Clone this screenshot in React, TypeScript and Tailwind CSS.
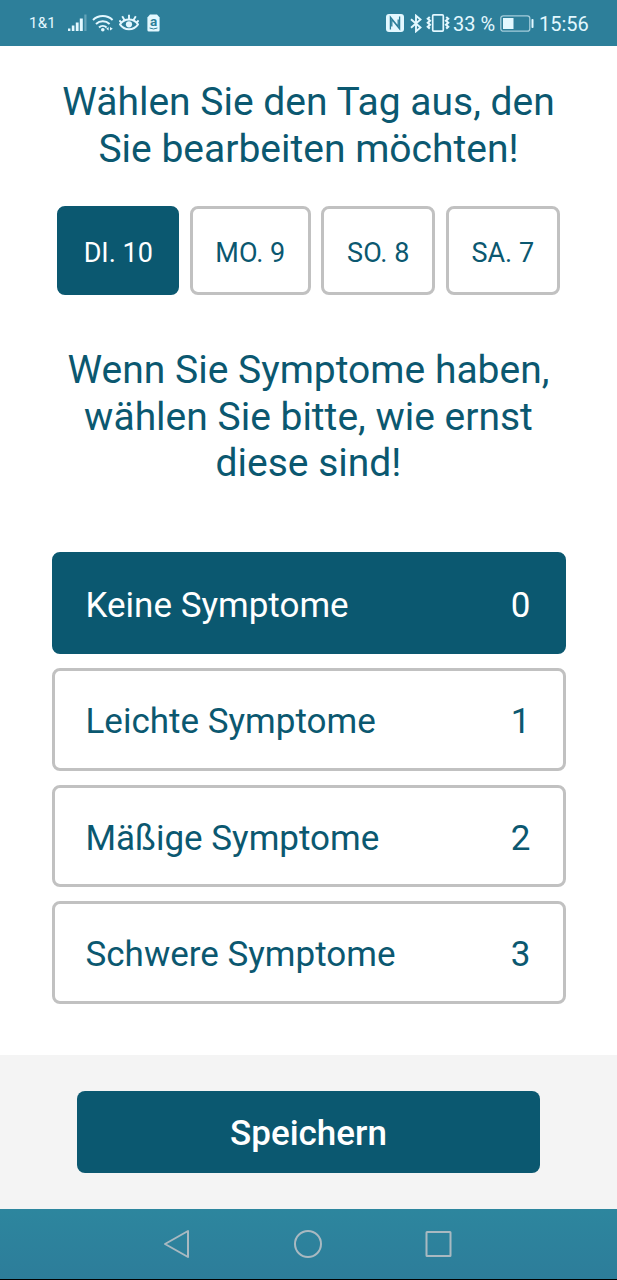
import { useState } from 'react';

const DAYS = [
  { label: 'DI. 10', width: 'w-[122px]' },
  { label: 'MO. 9', width: 'w-[121px]' },
  { label: 'SO. 8', width: 'w-[114px]' },
  { label: 'SA. 7', width: 'w-[114px]' },
];

const SYMPTOMS = ['Keine Symptome', 'Leichte Symptome', 'Mäßige Symptome', 'Schwere Symptome'];

function SignalIcon() {
  return (
    <svg width="20" height="18" viewBox="0 0 20 18" fill="currentColor">
      <rect x="0" y="14.5" width="2.4" height="2.5" />
      <rect x="3.8" y="11.5" width="2.6" height="5.5" />
      <rect x="7.8" y="8.5" width="2.8" height="8.5" />
      <rect x="11.8" y="4.5" width="3" height="12.5" />
      <rect x="16.3" y="0.5" width="2.2" height="16.5" opacity="0.3" />
    </svg>
  );
}

function WifiIcon() {
  return (
    <svg width="22" height="18" viewBox="0 0 22 18" fill="none" stroke="currentColor" strokeWidth="2">
      <path d="M1 6a14.2 14.2 0 0 1 19.6 0" />
      <path d="M4 10a10 10 0 0 1 13.6 0" />
      <path d="M7 13.500a5.6 5.6 0 0 1 7.6 0" />
      <circle cx="10.8" cy="15.800" r="1.800" fill="currentColor" stroke="none" />
      <path d="M16.600 12.900v3.600l-2.400-1.800zM18 12.900v3.600l2.800-1.800z" fill="currentColor" stroke="none" />
    </svg>
  );
}

function EyeIcon() {
  return (
    <svg width="20" height="18" viewBox="0 0 20 18" fill="none" stroke="currentColor" strokeWidth="1.9">
      <path d="M1 10.4C5.4 3.8 14.6 3.8 19 10.4C14.6 16.9 5.4 16.9 1 10.4Z" />
      <circle cx="10" cy="10.3" r="3.1" fill="currentColor" stroke="none" />
      <path d="M10 5.2V.8M5.6 6.3L3.2 2.3M14.4 6.3L16.8 2.3M2.4 8.7L.4 6.4M17.6 8.7L19.6 6.4" />
    </svg>
  );
}

function AppstoreIcon() {
  return (
    <svg width="13" height="18" viewBox="0 0 13 18">
      <path d="M3 .5h7l2.6 3V16a1.6 1.6 0 0 1-1.6 1.6H2A1.6 1.6 0 0 1 .4 16V3.5z" fill="currentColor" />
      <text x="6.5" y="12.4" textAnchor="middle" fontSize="13.5" fontWeight="700" fontFamily="Roboto" fill="#2d7f9a">a</text>
      <path d="M2.6 14q4 1.9 7.8 0" fill="none" stroke="#2d7f9a" strokeWidth="1" />
    </svg>
  );
}

function NfcIcon() {
  return (
    <svg width="18" height="18" viewBox="0 0 18 18">
      <rect width="18" height="18" rx="3" fill="currentColor" />
      <path d="M4.4 15.6V3L12.2 12.6V5.6M13.6 2.4V15L5.800 5.4V12.400" fill="none" stroke="#2d7f9a" strokeWidth="1.300" />
    </svg>
  );
}

function BluetoothIcon() {
  return (
    <svg width="12" height="19" viewBox="0 0 12 19" fill="none" stroke="currentColor" strokeWidth="1.9">
      <path d="M1 5.2L10.5 13.5L6 17.3V1.7L10.5 5.500L1 13.8" />
    </svg>
  );
}

function VibrateIcon() {
  return (
    <svg width="24" height="18" viewBox="0 0 24 18" fill="none" stroke="currentColor" strokeWidth="1.7">
      <rect x="6.7" y=".9" width="10.6" height="16.2" rx="1" />
      <path d="M3.8 3L1.8 4.8L4 6.8L1.8 8.8L4 10.8L1.8 12.8L3.8 14.6M20.2 3L22.2 4.8L20 6.8L22.2 8.8L20 10.8L22.2 12.8L20.2 14.6" strokeWidth="2.1" />
    </svg>
  );
}

function BatteryIcon() {
  return (
    <svg width="34" height="17" viewBox="0 0 34 17">
      <rect x=".8" y=".8" width="29" height="15.4" rx="2.5" fill="none" stroke="currentColor" strokeWidth="1.3" opacity=".65" />
      <rect x="3" y="3" width="10.5" height="11" fill="currentColor" />
      <rect x="31.5" y="4" width="2" height="9" rx=".8" fill="currentColor" />
    </svg>
  );
}

function StatusBar() {
  return (
    <header className="flex h-[46px] shrink-0 items-center justify-between bg-[#2d7f9a] pr-7 pl-[29px] text-[#e3f8ff]">
      <div className="flex items-center">
        <span className="w-[39px] pt-px text-[15px] tracking-[0.2px]">1&amp;1</span>
        <SignalIcon />
        <span className="ml-1"><WifiIcon /></span>
        <span className="ml-[5px]"><EyeIcon /></span>
        <span className="ml-2"><AppstoreIcon /></span>
      </div>
      <div className="flex items-center">
        <NfcIcon />
        <span className="ml-1.5"><BluetoothIcon /></span>
        <span className="ml-1"><VibrateIcon /></span>
        <span className="ml-[3px] w-[47px] pt-0.5 text-[20px] whitespace-nowrap">33 %</span>
        <BatteryIcon />
        <span className="ml-[5px] w-[50px] pt-0.5 text-[20px] whitespace-nowrap">15:56</span>
      </div>
    </header>
  );
}

function NavBar() {
  return (
    <nav className="flex h-[71px] shrink-0 items-center justify-center gap-[101px] border-b border-black bg-linear-to-b from-[#2d869e] to-[#2d7d9a] pr-px text-[#a9b9c1]">
      <svg width="30" height="30" viewBox="0 0 30 30" fill="none" stroke="currentColor" strokeWidth="2" strokeLinejoin="round">
        <path d="M3 15L26 2V28Z" />
      </svg>
      <svg width="30" height="30" viewBox="0 0 30 30" fill="none" stroke="currentColor" strokeWidth="2">
        <circle cx="15" cy="15" r="13" />
      </svg>
      <svg width="30" height="30" viewBox="0 0 30 30" fill="none" stroke="currentColor" strokeWidth="2" strokeLinejoin="round">
        <rect x="2.500" y="3" width="24" height="24" rx=".5" />
      </svg>
    </nav>
  );
}

export default function App() {
  const [day, setDay] = useState(0);
  const [symptom, setSymptom] = useState(0);

  return (
    <div className="flex h-[1280px] w-[617px] flex-col bg-white font-['Roboto',sans-serif] text-[#0b5870]">
      <StatusBar />

      <main className="flex-1">
        <h1 className="pt-[33px] text-center text-[39px] leading-[46.5px]">
          Wählen Sie den Tag aus, den<br />Sie bearbeiten möchten!
        </h1>

        <div className="mt-[34px] flex justify-center gap-[10.5px]">
          {DAYS.map((d, i) => (
            <button key={d.label} onClick={() => setDay(i)}
              className={`h-[89px] rounded-[8px] border-3 pt-1.5 text-[27px] ${d.width} ${day === i ? 'border-[#0b5870] bg-[#0b5870] text-white' : 'border-[#c1c1c1] bg-white'}`}>
              {d.label}
            </button>
          ))}
        </div>

        <h2 className="mt-[52px] text-center text-[39px] leading-[46.5px]">
          Wenn Sie Symptome haben,<br />wählen Sie bitte, wie ernst<br />diese sind!
        </h2>

        <div className="mx-auto mt-[65px] flex w-[514px] flex-col gap-[14px]">
          {SYMPTOMS.map((label, i) => (
            <button key={label} onClick={() => setSymptom(i)}
              className={`flex h-[102.5px] items-center justify-between rounded-[8px] border-3 pt-1.5 pr-8 pl-[31px] text-[35px] ${symptom === i ? 'border-[#0b5870] bg-[#0b5870] text-white' : 'border-[#c1c1c1] bg-white'}`}>
              <span>{label}</span>
              <span>{i}</span>
            </button>
          ))}
        </div>
      </main>

      <footer className="flex h-[154px] shrink-0 items-center justify-center bg-[#f4f4f4]">
        <button className="h-[82px] w-[463px] rounded-[8px] bg-[#0b5870] pt-1 text-[35px] font-medium text-white">
          Speichern
        </button>
      </footer>

      <NavBar />
    </div>
  );
}
